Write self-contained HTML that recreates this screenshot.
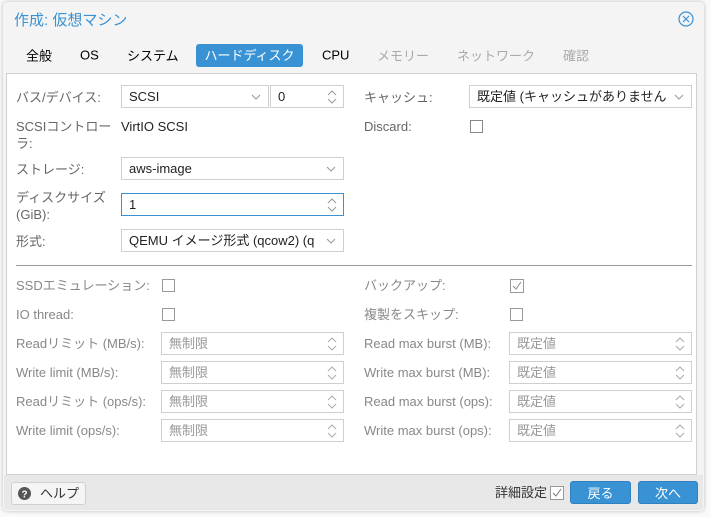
<!DOCTYPE html>
<html><head><meta charset="utf-8"><style>
*{box-sizing:border-box}
body{margin:0;width:711px;height:517px;background:#fafafa;font-family:"Liberation Sans","Noto Sans CJK JP",sans-serif;font-size:13px;position:relative;overflow:hidden}
.a{position:absolute;white-space:nowrap}
#dlg{position:absolute;left:3px;top:2px;width:701px;height:509px;background:#f4f4f4;border-radius:4px;box-shadow:0 0 4px rgba(0,0,0,.25)}
.lb{color:#666;line-height:16px}
.lb2{color:#888;line-height:16px}
.box{position:absolute;height:23px;border:1px solid #cfcfcf;background:#fff;line-height:21px;padding-left:7px;color:#222}
.ph{color:#999}
.chev{position:absolute;right:6px;top:6px;width:12px;height:10px;background:#fff}
.spin{position:absolute;right:6px;top:3px;width:10px;height:16px}
.cb{position:absolute;width:13px;height:13px;border:1px solid #888;background:#fff}
.tab{position:absolute;top:55px;transform:translateY(-50%);font-size:13px}
.btn{position:absolute;height:23px;border-radius:3px;background:#3892d4;color:#fff;text-align:center;line-height:23px;border:1px solid #2f81c0}
</style></head><body>
<div id="dlg"></div>
<div class="a" style="left:14px;top:9px;font-size:15px;color:#3892d4">作成: 仮想マシン</div>
<svg class="a" style="left:678px;top:11px" width="16" height="16"><circle cx="8" cy="8" r="7" fill="none" stroke="#3892d4" stroke-width="1.2"/><path d="M5 5L11 11M11 5L5 11" stroke="#3892d4" stroke-width="1.2"/></svg>
<div class="a tab" style="left:26px">全般</div>
<div class="a tab" style="left:80px">OS</div>
<div class="a tab" style="left:127px">システム</div>
<div class="a" style="left:196px;top:44px;width:107px;height:23px;background:#3892d4;border-radius:3px;color:#fff;text-align:center;line-height:23px">ハードディスク</div>
<div class="a tab" style="left:322px">CPU</div>
<div class="a tab" style="left:377px;color:#aaa">メモリー</div>
<div class="a tab" style="left:457px;color:#aaa">ネットワーク</div>
<div class="a tab" style="left:563px;color:#aaa">確認</div>
<div class="a" style="left:6px;top:73px;width:691px;height:402px;background:#fff;border:1px solid #cfcfcf"></div>

<div class="a lb" style="left:16px;top:90px">バス/デバイス:</div>
<div class="box" style="left:121px;top:85px;width:148px">SCSI<svg class="chev" viewBox="0 0 12 10"><path d="M2 3L6 7L10 3" fill="none" stroke="#999"/></svg></div>
<div class="box" style="left:270px;top:85px;width:74px">0<svg class="spin" viewBox="0 0 10 16"><path d="M1 6L5 2L9 6M1 10L5 14L9 10" fill="none" stroke="#999"/></svg></div>
<div class="a lb" style="left:364px;top:90px">キャッシュ:</div>
<div class="box" style="left:469px;top:85px;width:223px;overflow:hidden">既定値 (キャッシュがありません<svg class="chev" viewBox="0 0 12 10"><path d="M2 3L6 7L10 3" fill="none" stroke="#999"/></svg></div>

<div class="a lb" style="left:16px;top:119px">SCSIコントロー</div>
<div class="a lb" style="left:16px;top:136px">ラ:</div>
<div class="a" style="left:121px;top:119px;line-height:16px;color:#222">VirtIO SCSI</div>
<div class="a lb" style="left:364px;top:119px">Discard:</div>
<div class="cb" style="left:470px;top:120px"></div>

<div class="a lb" style="left:16px;top:162px">ストレージ:</div>
<div class="box" style="left:121px;top:157px;width:223px">aws-image<svg class="chev" viewBox="0 0 12 10"><path d="M2 3L6 7L10 3" fill="none" stroke="#999"/></svg></div>
<div class="a lb" style="left:16px;top:190px">ディスクサイズ</div>
<div class="a lb" style="left:16px;top:207px">(GiB):</div>
<div class="box" style="left:121px;top:193px;width:223px;border-color:#3892d4">1<svg class="spin" viewBox="0 0 10 16"><path d="M1 6L5 2L9 6M1 10L5 14L9 10" fill="none" stroke="#999"/></svg></div>
<div class="a lb" style="left:16px;top:234px">形式:</div>
<div class="box" style="left:121px;top:229px;width:223px;overflow:hidden">QEMU イメージ形式 (qcow2) (q<svg class="chev" viewBox="0 0 12 10"><path d="M2 3L6 7L10 3" fill="none" stroke="#999"/></svg></div>

<div class="a" style="left:16px;top:265px;width:676px;height:1px;background:#999"></div>

<div class="a lb2" style="left:16px;top:278px">SSDエミュレーション:</div>
<div class="cb" style="left:162px;top:279px;border-color:#999"></div>
<div class="a lb2" style="left:16px;top:307px">IO thread:</div>
<div class="cb" style="left:162px;top:308px;border-color:#999"></div>
<div class="a lb2" style="left:364px;top:278px">バックアップ:</div>
<svg class="a" style="left:510px;top:279px" width="14" height="14"><rect x="0.5" y="0.5" width="13" height="13" fill="#fff" stroke="#999"/><path d="M3 7L6 10L11 3" fill="none" stroke="#888"/></svg>
<div class="a lb2" style="left:364px;top:307px">複製をスキップ:</div>
<div class="cb" style="left:510px;top:308px;border-color:#999"></div>

<div class="a lb2" style="left:16px;top:336px">Readリミット (MB/s):</div>
<div class="a lb2" style="left:16px;top:365px">Write limit (MB/s):</div>
<div class="a lb2" style="left:16px;top:394px">Readリミット (ops/s):</div>
<div class="a lb2" style="left:16px;top:423px">Write limit (ops/s):</div>
<div class="box ph" style="left:161px;top:332px;width:183px">無制限<svg class="spin" viewBox="0 0 10 16"><path d="M1 6L5 2L9 6M1 10L5 14L9 10" fill="none" stroke="#aaa"/></svg></div>
<div class="box ph" style="left:161px;top:361px;width:183px">無制限<svg class="spin" viewBox="0 0 10 16"><path d="M1 6L5 2L9 6M1 10L5 14L9 10" fill="none" stroke="#aaa"/></svg></div>
<div class="box ph" style="left:161px;top:390px;width:183px">無制限<svg class="spin" viewBox="0 0 10 16"><path d="M1 6L5 2L9 6M1 10L5 14L9 10" fill="none" stroke="#aaa"/></svg></div>
<div class="box ph" style="left:161px;top:419px;width:183px">無制限<svg class="spin" viewBox="0 0 10 16"><path d="M1 6L5 2L9 6M1 10L5 14L9 10" fill="none" stroke="#aaa"/></svg></div>

<div class="a lb2" style="left:364px;top:336px">Read max burst (MB):</div>
<div class="a lb2" style="left:364px;top:365px">Write max burst (MB):</div>
<div class="a lb2" style="left:364px;top:394px">Read max burst (ops):</div>
<div class="a lb2" style="left:364px;top:423px">Write max burst (ops):</div>
<div class="box ph" style="left:509px;top:332px;width:183px">既定値<svg class="spin" viewBox="0 0 10 16"><path d="M1 6L5 2L9 6M1 10L5 14L9 10" fill="none" stroke="#aaa"/></svg></div>
<div class="box ph" style="left:509px;top:361px;width:183px">既定値<svg class="spin" viewBox="0 0 10 16"><path d="M1 6L5 2L9 6M1 10L5 14L9 10" fill="none" stroke="#aaa"/></svg></div>
<div class="box ph" style="left:509px;top:390px;width:183px">既定値<svg class="spin" viewBox="0 0 10 16"><path d="M1 6L5 2L9 6M1 10L5 14L9 10" fill="none" stroke="#aaa"/></svg></div>
<div class="box ph" style="left:509px;top:419px;width:183px">既定値<svg class="spin" viewBox="0 0 10 16"><path d="M1 6L5 2L9 6M1 10L5 14L9 10" fill="none" stroke="#aaa"/></svg></div>

<div class="a" style="left:4px;top:475px;width:699px;height:35px;background:#e8e8e8;border-radius:0 0 4px 4px"></div>
<div class="a" style="left:11px;top:482px;width:75px;height:23px;background:#f5f5f5;border:1px solid #d0d0d0;border-radius:3px;line-height:21px;padding-left:28px;color:#333">ヘルプ</div>
<svg class="a" style="left:18px;top:487px" width="13" height="13"><circle cx="6.5" cy="6.5" r="6.5" fill="#555"/><text x="6.5" y="10.5" font-size="10" font-weight="bold" fill="#fff" text-anchor="middle" font-family="Liberation Sans">?</text></svg>
<div class="a" style="left:495px;top:485px;color:#333;line-height:16px">詳細設定</div>
<svg class="a" style="left:550px;top:486px" width="14" height="14"><rect x="0.5" y="0.5" width="13" height="13" fill="#fff" stroke="#999"/><path d="M3 7L6 10L11 3" fill="none" stroke="#777"/></svg>
<div class="btn" style="left:570px;top:481px;width:61px">戻る</div>
<div class="btn" style="left:638px;top:481px;width:60px">次へ</div>
</body></html>
